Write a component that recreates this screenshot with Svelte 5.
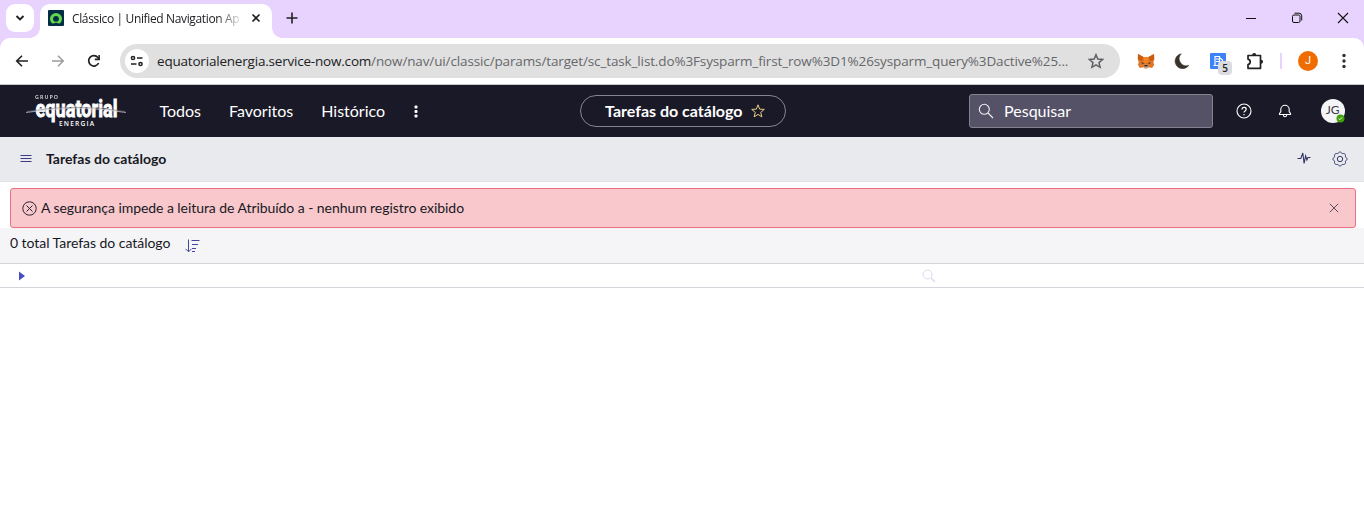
<script>
  const links = ['Todos', 'Favoritos', 'Histórico'];
  const gear = Array.from({ length: 81 }, (_, i) => {
    const a = (i / 80) * Math.PI * 2;
    const r = 5.7 + 1.3 * Math.abs(Math.cos(a * 4));
    return `${(8 + r * Math.cos(a)).toFixed(2)},${(8 + r * Math.sin(a)).toFixed(2)}`;
  }).join(' ');
</script>

<div class="window">
  <div class="tabs">
    <button class="tabsearch" aria-label="Tabs"><svg width="10" height="10" viewBox="0 0 10 10"><path d="M1.5 3 5 6.5 8.5 3" fill="none" stroke="#202124" stroke-width="1.9" /></svg></button>
    <div class="tab">
      <svg class="fav" width="16" height="16" viewBox="0 0 16 16"><rect width="16" height="16" rx="1" fill="#032d42" /><path d="M3.800 13.200a6 6 0 1 1 8.400 0l-1.700.4c-1.500-1.200-3.500-1.200-5 0Z" fill="#62d84e" /><circle cx="8" cy="8.800" r="2.900" fill="#032d42" /></svg>
      <span class="tabtitle">Clássico | Unified Navigation Ap</span>
      <svg class="tabclose" width="10" height="10" viewBox="0 0 10 10"><path d="m1.500 1.500 7 7m0-7-7 7" stroke="#1c1d20" stroke-width="1.600" /></svg>
    </div>
    <svg class="plus" width="12" height="12" viewBox="0 0 12 12"><path d="M6 .5v11M.5 6h11" stroke="#202124" stroke-width="1.600" /></svg>
    <div class="controls">
      <svg width="12" height="12" viewBox="0 0 12 12"><path d="M1 6.500h10" stroke="#111" /></svg>
      <svg width="12" height="12" viewBox="0 0 12 12" fill="none" stroke="#111"><rect x="1.500" y="3" width="7.500" height="7.500" rx="1.500" /><path d="M3.500 1.200H8a2.700 2.700 0 0 1 2.700 2.700v4.600" /></svg>
      <svg width="12" height="12" viewBox="0 0 12 12"><path d="m1 1 10 10m0-10L1 11" stroke="#111" stroke-width="1.100" /></svg>
    </div>
  </div>

  <div class="toolbar">
    <svg class="nav" width="14" height="14" viewBox="0 0 14 14" fill="none" stroke="#202124" stroke-width="1.600"><path d="M13 7H2M7 1.700 1.700 7 7 12.300" /></svg>
    <svg class="nav" width="14" height="14" viewBox="0 0 14 14" fill="none" stroke="#9b9b9b" stroke-width="1.400"><path d="M1 7h11M7 1.700 12.300 7 7 12.300" /></svg>
    <svg class="nav" width="14" height="14" viewBox="0 0 14 14"><path d="M11.600 9a5.200 5.200 0 1 1-.7-5.500L12 4.800" fill="none" stroke="#202124" stroke-width="1.700" /><path d="M12.900 1v5.200H7.800V4.600h3.600V1Z" fill="#202124" /></svg>
    <div class="omni">
      <span class="site"><svg width="14" height="12" viewBox="0 0 14 12" fill="none" stroke="#202124" stroke-width="1.500"><circle cx="3" cy="3" r="1.600" /><path d="M7 3h5.500M1 9h5.500" /><circle cx="10.500" cy="9" r="1.600" /></svg></span>
      <span class="url"><b>equatorialenergia.service-now.com</b><span>/now/nav/ui/classic/params/target/sc_task_list.do%3Fsysparm_first_row%3D1%26sysparm_query%3Dactive%25...</span></span>
      <svg class="bookmark" width="16" height="16" viewBox="0 0 16 16"><path d="m8 1.700 1.800 4.400 4.800.4L11 9.600l1.100 4.700L8 11.800l-4.100 2.500L5 9.600 1.400 6.500l4.800-.4Z" fill="none" stroke="#5f6063" stroke-width="1.500" /></svg>
    </div>
    <svg class="fox" width="18" height="16" viewBox="0 0 18 16"><path d="m1 1 5.500 3h5L17 1l.4 5-1 3 .7 3-2 3-3.500-.7-1.300 1.200H7.700l-1.300-1.200-3.500.7L1 12l.7-3-1-3Z" fill="#e27625" /><path d="m1 1 5.500 3L5 8 1.200 7ZM17 1l-5.500 3L13 8l3.800-1Z" fill="#c95c13" /><path d="m6.500 4 1 6h3l1-6Z" fill="#f5841f" /><path d="m4.500 9 3 1.500-2.500.3Zm9 0-3 1.500 2.500.3Z" fill="#233447" /><path d="m6.500 13 1-1.200h3l1 1.200-1.200 2H7.700Z" fill="#c0ad9e" /><path d="M7.500 12h3l.3 1.500H7.200Z" fill="#252b30" /></svg>
    <svg class="moon" width="16" height="16" viewBox="0 0 16 16"><path d="M7.300.8A7.500 7.500 0 1 0 14.900 12.200 7 7 0 0 1 7.300.8Z" fill="#38342c" stroke="#38342c" stroke-width=".5" /></svg>
    <div class="translator">
      <svg width="16" height="16" viewBox="0 0 16 16"><rect width="16" height="16" rx="1" fill="#3d82f6" /><path d="M5 12.500V3.500h4.500V12M6 6h3M6 8.500h3M10 5l2.500 2V10M3.500 12.500h4.500" fill="none" stroke="white" stroke-width="1.200" /></svg>
      <span class="count">5</span>
    </div>
    <svg class="puzzle" width="18" height="18" viewBox="0 0 18 18"><path d="M2 3.500h12.500v12.800H2v-3.600c3-.7 3-5 0-5.600Z" fill="none" stroke="#202124" stroke-width="1.700" stroke-linejoin="round" /><path d="M6.200 3a2 2 0 0 1 4 0ZM15 7.800a2 2 0 0 1 0 4Z" fill="#202124" /></svg>
    <i class="split"></i>
    <span class="profile">J</span>
    <svg class="menu" width="4" height="16" viewBox="0 0 4 16" fill="#303134"><circle cx="2" cy="2.500" r="1.700" /><circle cx="2" cy="8" r="1.700" /><circle cx="2" cy="13.500" r="1.700" /></svg>
  </div>

  <header>
    <svg class="logo" width="102" height="36" viewBox="0 0 102 36" fill="#fff">
      <text x="9" y="7" class="small" font-size="5.300" textLength="23" opacity=".85">GRUPO</text>
      <text transform="translate(9.500 25) scale(1 1.100)" class="brand" textLength="82" lengthAdjust="spacingAndGlyphs">equatorial</text>
      <path d="M1 19.500Q50 11 99 19.500" fill="none" stroke="#77757f" stroke-width=".6" />
      <path d="M0 20.500Q50 12 100 20.500" fill="none" stroke="#d5d5da" stroke-width=".7" />
      <text x="33" y="33.500" class="small" font-size="6.600" textLength="35">ENERGIA</text>
    </svg>
    <nav>{#each links as link}<span>{link}</span>{/each}</nav>
    <svg class="more" width="4" height="13" viewBox="0 0 4 13" fill="#fff"><rect x=".5" y=".5" width="3" height="3" rx="1" /><rect x=".5" y="5" width="3" height="3" rx="1" /><rect x=".5" y="9.500" width="3" height="3" rx="1" /></svg>
    <div class="pill"><strong>Tarefas do catálogo</strong><svg width="14" height="14" viewBox="0 0 14 14"><path d="m7 .8 1.700 4.400 4.600.2-3.600 3 1.200 4.500L7 10.400l-3.900 2.500 1.200-4.500-3.600-3 4.600-.2Z" fill="none" stroke="#e6cd80" /></svg></div>
    <div class="search"><svg width="16" height="16" viewBox="0 0 16 16" fill="none" stroke="#f1f0f5" stroke-width="1.100"><circle cx="6.300" cy="6.300" r="5" /><path d="m10 10 5 5" /></svg><span>Pesquisar</span></div>
    <svg class="help" width="16" height="16" viewBox="0 0 16 16" fill="none" stroke="#fff" stroke-width="1.100"><circle cx="8" cy="8" r="7" /><path d="M6 6.500c0-2.800 4.200-2.600 4.200-.2C10.200 8 8 7.800 8 9.600M8 11v1.300" stroke-width="1.200" /></svg>
    <svg class="bell" width="14" height="14" viewBox="0 0 14 14" fill="none" stroke="#fff" stroke-width="1.100"><path d="M1.500 10.500v-1l1.300-1.700V5.500a4.200 4.200 0 0 1 8.400 0v2.300l1.300 1.700v1ZM5.300 11c.3 2.300 3.100 2.300 3.400 0" /></svg>
    <div class="avatar">JG<svg width="9" height="9" viewBox="0 0 9 9"><circle cx="4.500" cy="4.500" r="4" fill="#41a00a" /><path d="m2.600 4.500 1.200 1.200 2.400-2.400" fill="none" stroke="#fff" stroke-width=".9" /></svg></div>
  </header>

  <div class="listbar">
    <svg width="12" height="10" viewBox="0 0 12 10"><path d="M.5 1.500h11M.5 4.500h11M.5 7.500h11" stroke="#3d3a82" /></svg>
    <h1>Tarefas do catálogo</h1>
    <svg class="activity" width="14" height="14" viewBox="0 0 14 14"><path d="M.5 7.500h3.300L5.800 2l1.300 10.500L8.600 5l1.300 4 1-2.500h2.600" fill="none" stroke="#333567" stroke-width="1.100" /></svg>
    <svg class="gear" width="16" height="16" viewBox="0 0 16 16" fill="none" stroke="#38386f"><polygon points={gear} /><circle cx="8" cy="8" r="2.700" /></svg>
  </div>
  <div class="notice">
    <svg width="15" height="15" viewBox="0 0 15 15" fill="none" stroke="#29252f"><circle cx="7.500" cy="7.500" r="6.700" /><path d="m4.500 4.500 6 6m0-6-6 6" /></svg>
    <span>A segurança impede a leitura de Atribuído a - nenhum registro exibido</span>
    <svg class="dismiss" width="10" height="10" viewBox="0 0 10 10"><path d="m.8.8 8.400 8.400m0-8.400L.8 9.200" stroke="#5d4961" /></svg>
  </div>
  <div class="summary">
    <span>0 total Tarefas do catálogo</span>
    <svg width="15" height="14" viewBox="0 0 15 14" fill="none" stroke="#45459b"><path d="M3.500.5v12M.5 9.800l3 3 3-3M6.500 1.500h8M7 5.500h6M7 9.500h4M7 12.500h3" /></svg>
  </div>
  <div class="filter">
    <svg width="6" height="10" viewBox="0 0 6 10"><path d="M0 .5 6 5 0 9.500Z" fill="#4a4dc0" /></svg>
    <svg class="find" width="14" height="14" viewBox="0 0 14 14" fill="none" stroke="#dcdaeb"><circle cx="5.500" cy="5.500" r="4.500" /><path d="m9 9 4 4" stroke-width="1.400" /></svg>
  </div>
</div>

<style>
  :global(body) { margin: 0; background: #fff; overflow: hidden; }
  * { box-sizing: border-box; }
  svg { display: block; flex: none; }
  .window { width: 1364px; height: 527px; font-family: Lato, sans-serif; color: #181824; background: #fff; }
  .tabs { height: 50px; display: flex; background: #e8d3ff; padding-left: 6px; }
  .tabsearch { width: 28px; height: 28px; margin-top: 4px; padding: 0; border: 0; border-radius: 9px; background: #fff; display: grid; place-items: center; }
  .tab { width: 232px; height: 38px; margin: 4px 0 0 6px; border-radius: 10px 10px 0 0; background: #fff; display: flex; padding: 6px 0 0 8px; position: relative; }
  .tab::before, .tab::after { content: ""; position: absolute; top: 24px; width: 10px; height: 10px; }
  .tab::before { left: -10px; background: radial-gradient(circle at 0 0, transparent 9.500px, #fff 10px); }
  .tab::after { right: -10px; background: radial-gradient(circle at 100% 0, transparent 9.500px, #fff 10px); }
  .tabtitle { width: 168px; margin: 0 0 0 8px; font: 12px/17px "Open Sans", sans-serif; letter-spacing: -.36px; white-space: nowrap; overflow: hidden; color: #202124; mask-image: linear-gradient(to right, #000 145px, transparent 172px); }
  .tabclose { margin: 3px 0 0 11px; }
  .plus { margin: 12px 0 0 14px; }
  .controls { display: flex; gap: 34px; margin: 12px 15px 0 auto; }
  .toolbar { height: 47px; margin-top: -12px; position: relative; border-radius: 10px 10px 0 0; background: #fff; border-bottom: 1px solid #c7cac9; display: flex; align-items: center; padding-left: 15px; }
  .nav { margin-right: 22px; }
  .omni { width: 1000px; height: 34px; border-radius: 17px; background: #e0e0e0; display: flex; align-items: center; padding-left: 5px; margin-left: -3px; }
  .site { width: 24px; height: 24px; border-radius: 50%; background: #fff; display: grid; place-items: center; }
  .url { width: 914px; margin-left: 8px; font: 13.500px/20px "Open Sans", sans-serif; color: #66686b; white-space: nowrap; }
  .url b { font-weight: 400; color: #202124; letter-spacing: -.2px; }
  .url span { letter-spacing: -.13px; }
  .bookmark { margin-left: 17px; }
  .fox { margin-left: 17px; }
  .moon { margin-left: 19px; }
  .translator { margin-left: 20px; width: 22px; position: relative; }
  .count { position: absolute; left: 8px; top: 8px; width: 14px; height: 14px; border-radius: 4px; background: #dadce0; color: #202124; text-align: center; font: 600 10px/14px "Open Sans", sans-serif; }
  .puzzle { margin-left: 14px; }
  .split { width: 2px; height: 16px; background: #e8d3ff; margin-left: 16px; }
  .profile { width: 20px; height: 20px; border-radius: 50%; margin-left: 16px; background: #ef6c00; color: #fff; text-align: center; font: 11px/20px Roboto, sans-serif; }
  .menu { margin-left: 24px; }
  header { height: 52px; background: #1a1927; color: #fff; display: flex; align-items: center; padding-left: 26px; font-size: 16px; }
  .logo { margin-top: -2px; overflow: visible; }
  .small { font-family: "Open Sans", sans-serif; font-weight: 600; }
  .brand { font: 700 22px Roboto, sans-serif; stroke: #fff; stroke-width: .8px; }
  nav { display: flex; gap: 28px; margin: -2px 0 0 31.500px; }
  .more { margin-left: 28.500px; }
  .pill { width: 206px; height: 32px; margin-left: 162px; border: 1px solid #85858f; border-radius: 16px; display: flex; align-items: center; gap: 8px; padding-left: 24.500px; white-space: nowrap; }
  .pill strong { margin-top: -2px; }
  .search { width: 244px; height: 34px; margin-left: 183px; border: 1px solid #85838f; border-radius: 3px; background: #555268; display: flex; align-items: center; padding-left: 8px; gap: 10.500px; }
  .search span { margin-top: -1px; }
  .help { margin-left: 23px; }
  .bell { margin-left: 26px; }
  .avatar { width: 24px; height: 24px; border-radius: 50%; margin-left: 29px; position: relative; background: #f5f5f7; color: #3b3a46; text-align: center; font: 12px/22px Lato, sans-serif; }
  .avatar svg { position: absolute; right: 0; bottom: 0; }
  .listbar { height: 45px; background: #e8eaed; border-bottom: 1px solid #e1e3e7; display: flex; align-items: center; padding-left: 20px; }
  h1 { margin: 0 0 0 14px; font-size: 14px; line-height: 20px; }
  .activity { margin-left: auto; margin-top: -2px; }
  .gear { margin: 0 16px 0 21px; }
  .notice { width: 1346px; height: 40px; margin: 6px 0 0 10px; border: 1px solid #ec7180; border-radius: 3px; background: #f8c8cc; display: flex; align-items: center; padding-left: 11px; font-size: 14px; }
  .notice span { margin: -2px 0 0 4px; letter-spacing: -.06px; }
  .dismiss { margin: 0 16px 0 auto; }
  .summary { height: 36px; background: #f5f5f7; border-bottom: 1px solid #d4d5d9; display: flex; padding: 6px 0 0 10px; font-size: 14px; line-height: 17px; letter-spacing: -.04px; }
  .summary svg { margin: 5px 0 0 15px; }
  .filter { height: 24px; border-bottom: 1px solid #d4d5db; display: flex; padding: 7px 0 0 19px; }
  .find { margin: -2px 0 0 897px; }
</style>
